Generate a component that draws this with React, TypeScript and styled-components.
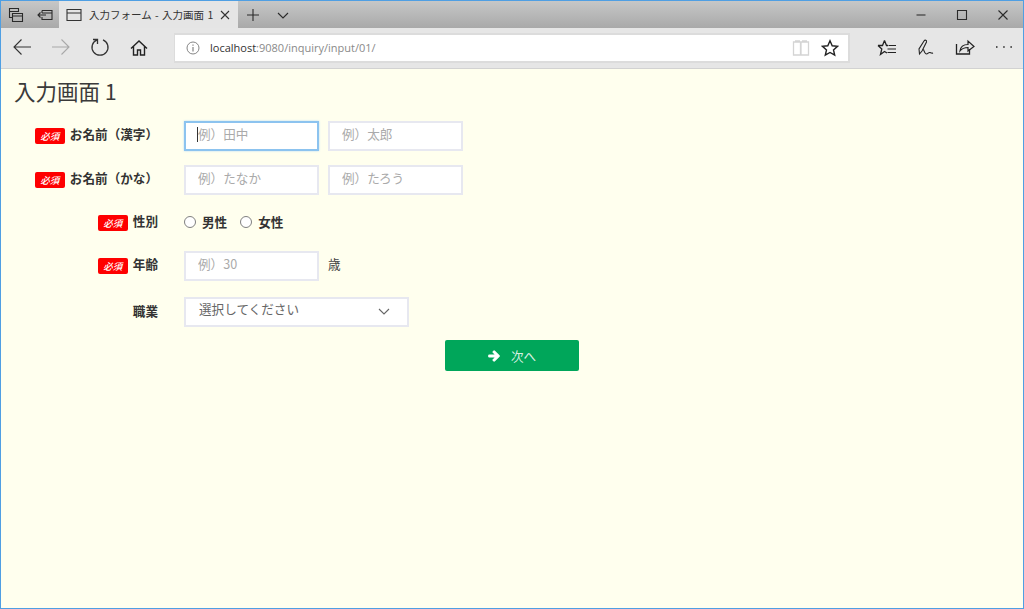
import styled, { createGlobalStyle } from "styled-components";
import { FaArrowRight } from "react-icons/fa";

const FONT = `"Noto Sans CJK JP", "Noto Sans", sans-serif`;

const GlobalStyle = createGlobalStyle`
  html, body {
    margin: 0;
    padding: 0;
    height: 100%;
    overflow: hidden;
  }
  * {
    box-sizing: border-box;
  }
`;

const Window = styled.div`
  width: 1024px;
  height: 609px;
  border: 1px solid #4f9fe3;
  display: flex;
  flex-direction: column;
  font-family: ${FONT};
  background: #ffffee;
`;

const TitleBar = styled.div`
  height: 27px;
  display: flex;
  align-items: stretch;
  background: linear-gradient(to bottom, #c6c7c7, #a9a9a9);
`;

const ChromeButton = styled.div<{ $width: number; $left?: number; $lift?: number }>`
  width: ${({ $width }) => $width}px;
  flex: none;
  margin-left: ${({ $left }) => $left ?? 0}px;
  padding-bottom: ${({ $lift }) => $lift ?? 0}px;
  display: flex;
  align-items: center;
  justify-content: center;
  color: #2a2a2a;
`;

const Tab = styled.div`
  width: 179px;
  flex: none;
  display: flex;
  align-items: center;
  padding: 0 7px;
  background: #e5e5e5;
  color: #333;
`;

const TabTitle = styled.span`
  flex: 1;
  margin-left: 7px;
  font-size: 10.5px;
  word-spacing: 1px;
  white-space: nowrap;
  overflow: hidden;
`;

const Spacer = styled.div`
  flex: 1;
`;

const Toolbar = styled.div`
  height: 41px;
  display: flex;
  align-items: center;
  padding-left: 1px;
  background: #e6e6e6;
  border-bottom: 1px solid #d2d2d2;
`;

const AddressBar = styled.div`
  flex: 1;
  height: 30px;
  margin: 0 17px 1px 16px;
  display: flex;
  align-items: center;
  padding: 0 9px 0 11px;
  background: #fff;
  border: 2px solid #dcdcdc;
  border-left-width: 1px;
`;

const Url = styled.span`
  margin-left: 10px;
  flex: 1;
  font-family: "Open Sans", sans-serif;
  font-size: 11px;
  color: #8a8a8a;
`;

const UrlHost = styled.span`
  color: #333;
`;

const Page = styled.main`
  flex: 1;
`;

const Heading = styled.h1`
  margin: 7px 0 14px 13px;
  font-size: 21.5px;
  line-height: 30px;
  font-weight: 400;
  color: #3a3a3a;
`;

const Form = styled.form`
  display: flex;
  flex-direction: column;
`;

const Row = styled.div<{ $height?: number; $gap?: number }>`
  display: grid;
  grid-template-columns: 157px 1fr;
  column-gap: 26px;
  align-items: center;
  height: ${({ $height }) => $height ?? 30}px;
  margin-bottom: ${({ $gap }) => $gap ?? 14}px;
`;

const LabelCell = styled.div`
  display: flex;
  justify-content: flex-end;
  align-items: center;
  gap: 5px;
`;

const Label = styled.label`
  font-size: 12.6px;
  line-height: 16px;
  font-weight: 700;
  color: #333;
  margin-top: -2px;
  white-space: nowrap;
`;

const Required = styled.span`
  width: 30px;
  height: 16px;
  margin-top: 1px;
  display: flex;
  align-items: center;
  justify-content: center;
  background: #fe0000;
  border-radius: 2px;
  color: #fff;
  font-family: "Noto Sans CJK JP", serif;
  font-size: 9.5px;
  font-style: italic;
  font-weight: 500;
`;

const Fields = styled.div`
  display: flex;
  align-items: center;
  gap: 9px;
`;

const InputWrap = styled.div`
  position: relative;
  width: 135px;
  height: 30px;
`;

const TextInput = styled.input<{ $focused?: boolean }>`
  width: 100%;
  height: 100%;
  padding: 0 0 4px 12px;
  background: #fff;
  border: 2px solid ${({ $focused }) => ($focused ? "#8cc3ef" : "#e7e8f0")};
  box-shadow: ${({ $focused }) => ($focused ? "0 0 2px #b5daf7" : "none")};
  outline: none;
  font-family: ${FONT};
  font-size: 12.6px;
  color: #333;

  &::placeholder {
    color: #aaa;
    opacity: 1;
  }
`;

const Caret = styled.span`
  position: absolute;
  left: 13px;
  top: 7px;
  width: 1px;
  height: 15px;
  background: #333;
`;

const Unit = styled.span`
  font-size: 12.6px;
  color: #444;
  margin-top: -4px;
`;

const RadioLabel = styled.label`
  display: flex;
  align-items: center;
  gap: 6px;
  font-size: 12.6px;
  font-weight: 700;
  color: #333;
  margin-right: 4px;
  margin-top: -2px;
`;

const Radio = styled.input.attrs({ type: "radio" })`
  appearance: none;
  width: 12px;
  height: 12px;
  margin: 2px 0 0;
  background: #fff;
  border: 1px solid #808080;
  border-radius: 50%;
`;

const SelectBox = styled.div`
  width: 225px;
  height: 30px;
  padding: 0 17px 7px 13px;
  display: flex;
  align-items: center;
  justify-content: space-between;
  background: #fff;
  border: 2px solid #e7e8f0;
  font-size: 12.6px;
  color: #666;
`;

const Chevron = styled.svg`
  margin-top: 7px;
`;

const Actions = styled.div`
  display: flex;
  justify-content: center;
  margin-top: -1px;
`;

const NextButton = styled.button`
  width: 134px;
  height: 31px;
  display: flex;
  align-items: center;
  justify-content: center;
  gap: 11px;
  background: #00a65a;
  border: none;
  border-radius: 2px;
  color: rgba(255, 255, 255, 0.85);
  font-family: ${FONT};
  font-size: 12.6px;
  padding: 0;

  svg {
    color: #fff;
    stroke: #fff;
    stroke-width: 50px;
  }
`;

const Ico = ({ size = 18, children }: { size?: number; children: React.ReactNode }) => (
  <svg
    width={size}
    height={size}
    viewBox={`0 0 ${size} ${size}`}
    fill="none"
    stroke="currentColor"
    strokeWidth="1.1"
  >
    {children}
  </svg>
);

const App = () => {
  return (
    <Window>
      <GlobalStyle />
      <TitleBar>
        <ChromeButton $width={29}>
          <Ico size={16}>
            <path d="M1.5 1.5h9v3h-9zM1.5 4.5v6h3M4.5 6.5h10v8h-10zM4.5 9h10" />
          </Ico>
        </ChromeButton>
        <ChromeButton $width={29}>
          <Ico size={16}>
            <path d="M5 3.5h10v9H5V10M5 6V3.5M5 6h10M1 8h8M3.5 5.500 1 8l2.500 2.500" />
          </Ico>
        </ChromeButton>
        <Tab>
          <Ico size={16}>
            <path d="M1 2.500h14v11H1zM1 6h14" />
          </Ico>
          <TabTitle>入力フォーム - 入力画面 1</TabTitle>
          <Ico size={12}>
            <path d="M2 2l8 8M10 2l-8 8" />
          </Ico>
        </Tab>
        <ChromeButton $width={30}>
          <Ico size={14}>
            <path d="M7 1v12M1 7h12" />
          </Ico>
        </ChromeButton>
        <ChromeButton $width={30}>
          <Ico size={14}>
            <path d="M2 5l5 5 5-5" />
          </Ico>
        </ChromeButton>
        <Spacer />
        <ChromeButton $width={41}>
          <Ico size={12}>
            <path d="M1.500 6h9" stroke="#555" strokeWidth="1.500" />
          </Ico>
        </ChromeButton>
        <ChromeButton $width={41}>
          <Ico size={12}>
            <path d="M1.500 1.500h9v9h-9z" />
          </Ico>
        </ChromeButton>
        <ChromeButton $width={41}>
          <Ico size={12}>
            <path d="M1.500 1.500l9 9M10.500 1.500l-9 9" />
          </Ico>
        </ChromeButton>
      </TitleBar>

      <Toolbar>
        <ChromeButton $width={39} $lift={2}>
          <Ico size={20}>
            <path d="M2 10h17M9.500 2.500 2 10l7.500 7.500" stroke="#333" />
          </Ico>
        </ChromeButton>
        <ChromeButton $width={39} $lift={2}>
          <Ico size={20}>
            <path d="M1 10h17M10.500 2.500 18 10l-7.500 7.500" stroke="#a8a8a8" />
          </Ico>
        </ChromeButton>
        <ChromeButton $width={39} $lift={2}>
          <Ico size={20}>
            <path d="M7 2.800a8 8 0 1 0 6 0M7.500 7V2.500H3" stroke="#333" strokeWidth="1.300" />
          </Ico>
        </ChromeButton>
        <ChromeButton $width={39} $lift={1}>
          <Ico size={18}>
            <path
              d="M1 9.500 9 2l8 7.500M3.500 7.500V16h4v-5h3v5h4V7.500"
              stroke="#222"
              strokeWidth="1.400"
            />
          </Ico>
        </ChromeButton>
        <AddressBar>
          <Ico size={14}>
            <circle cx="7" cy="7" r="6" stroke="#777" strokeWidth="0.9" />
            <path d="M7 6v4.500M7 3.500v1.200" stroke="#777" />
          </Ico>
          <Url>
            <UrlHost>localhost</UrlHost>:9080/inquiry/input/01/
          </Url>
          <ChromeButton $width={19}>
            <Ico size={18}>
              <path d="M1.500 3h7v13h-7zM9 3h7.500v13H9zM3 1.800h5M10 1.800h5" stroke="#d4d4d4" strokeWidth="1.300" />
            </Ico>
          </ChromeButton>
          <ChromeButton $width={19} $left={10}>
            <Ico size={18}>
              <path
                d="M9 1.800l2.200 5 5.300.5-4 3.600 1.200 5.300L9 13.500l-4.700 2.700 1.200-5.300-4-3.600 5.300-.5z"
                stroke="#222"
                strokeWidth="1.400"
              />
            </Ico>
          </ChromeButton>
        </AddressBar>
        <ChromeButton $width={39} $lift={2}>
          <Ico size={20}>
            <path
              d="M7.500 3.500 9.500 8.500H11M1 8.500h4.500l2-5M1 8.500 4.800 12 3.500 17.500l4-3 2.500 1.500"
              stroke="#222"
              strokeWidth="1.300"
            />
            <path d="M11.500 8.500H19M10.500 12H19M10.500 15.500H19" stroke="#222" />
          </Ico>
        </ChromeButton>
        <ChromeButton $width={39} $lift={2}>
          <Ico size={20}>
            <path
              d="M3.500 17 3 12l5-8c1-1.500 3-1 2.500 1L6 14zM7.500 12.500C8.500 15 9 17 10.500 17c1.500 0 2-2 3.500-1.500 1 .5 2 1 3 .5"
              stroke="#222"
              strokeWidth="1.100"
            />
          </Ico>
        </ChromeButton>
        <ChromeButton $width={39} $lift={2}>
          <Ico size={20}>
            <path d="M1.500 7v10h13v-5" stroke="#222" strokeWidth="1.300" />
            <path d="M5 14c.5-4 3.500-6.500 8-6.500V4l6 5.500-6 4.500v-3.500c-3 0-6 1-8 3.500z" stroke="#222" strokeWidth="1.200" />
          </Ico>
        </ChromeButton>
        <ChromeButton $width={39} $lift={2}>
          <Ico size={20}>
            <path d="M2 10h1.500M9.200 10h1.500M16.400 10h1.500" stroke="#222" strokeWidth="1.500" />
          </Ico>
        </ChromeButton>
      </Toolbar>

      <Page>
        <Heading>入力画面 1</Heading>
        <Form>
          <Row>
            <LabelCell>
              <Required>必須</Required>
              <Label>お名前（漢字）</Label>
            </LabelCell>
            <Fields>
              <InputWrap>
                <TextInput $focused placeholder="例）田中" />
                <Caret />
              </InputWrap>
              <InputWrap>
                <TextInput placeholder="例）太郎" />
              </InputWrap>
            </Fields>
          </Row>
          <Row>
            <LabelCell>
              <Required>必須</Required>
              <Label>お名前（かな）</Label>
            </LabelCell>
            <Fields>
              <InputWrap>
                <TextInput placeholder="例）たなか" />
              </InputWrap>
              <InputWrap>
                <TextInput placeholder="例）たろう" />
              </InputWrap>
            </Fields>
          </Row>
          <Row $height={28}>
            <LabelCell>
              <Required>必須</Required>
              <Label>性別</Label>
            </LabelCell>
            <Fields>
              <RadioLabel>
                <Radio name="gender" />
                男性
              </RadioLabel>
              <RadioLabel>
                <Radio name="gender" />
                女性
              </RadioLabel>
            </Fields>
          </Row>
          <Row $gap={17}>
            <LabelCell>
              <Required>必須</Required>
              <Label>年齢</Label>
            </LabelCell>
            <Fields>
              <InputWrap>
                <TextInput placeholder="例）30" />
              </InputWrap>
              <Unit>歳</Unit>
            </Fields>
          </Row>
          <Row>
            <LabelCell>
              <Label>職業</Label>
            </LabelCell>
            <SelectBox>
              選択してください
              <Chevron width="12" height="8" viewBox="0 0 12 8" fill="none" stroke="#666" strokeWidth="1.100">
                <path d="M1 1l5 5 5-5" />
              </Chevron>
            </SelectBox>
          </Row>
          <Actions>
            <NextButton type="button">
              <FaArrowRight size={12} />
              次へ
            </NextButton>
          </Actions>
        </Form>
      </Page>
    </Window>
  );
};

export default App;
